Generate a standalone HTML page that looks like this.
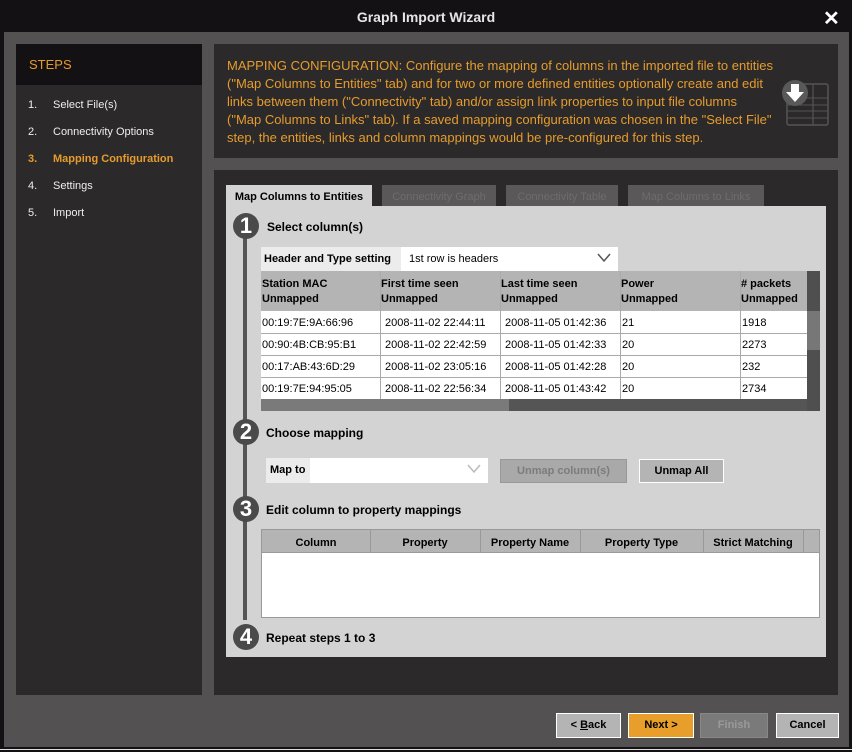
<!DOCTYPE html>
<html><head><meta charset="utf-8"><style>
*{margin:0;padding:0;box-sizing:border-box}
body{width:852px;height:752px;background:#141114;font-family:"Liberation Sans",Arial,sans-serif;position:relative;overflow:hidden}
.a{position:absolute}
.t{font-size:11px;color:#000}
.b{font-weight:bold}
.cell{position:absolute;font-size:11px;line-height:14px;color:#000;white-space:nowrap}
.circ{position:absolute;width:26px;height:26px;border-radius:50%;background:#4a4a4a;color:#fff;font-weight:bold;font-size:22px;line-height:26px;text-align:center;font-family:"Liberation Sans",Arial,sans-serif}
.btn{position:absolute;top:713px;height:25px;font-size:11px;font-weight:bold;text-align:center;line-height:23px;border:1px solid #fff}
</style></head><body>
<div class="a" style="left:0;top:0;width:852px;height:32px;background:#141114;color:#e6e6e6;font-size:14px;font-weight:bold;text-align:center;line-height:34px">Graph Import Wizard</div>
<div class="a" style="left:823px;top:6px;color:#fff;font-size:20px;font-weight:bold">✕</div>
<div class="a" style="left:4px;top:32px;width:845px;height:715px;background:#535152"></div>
<div class="a" style="left:0;top:749px;width:852px;height:1px;background:#ddd"></div>
<!-- sidebar -->
<div class="a" style="left:16px;top:44px;width:186px;height:651px;background:#2c292b"></div>
<div class="a" style="left:16px;top:44px;width:186px;height:41px;background:#141114"></div>
<div class="a" style="left:29px;top:57px;color:#e59c2c;font-size:13px">STEPS</div>
<div class="a" style="left:28px;top:92px;color:#eee;font-size:11px;line-height:27px">
<div><span style="display:inline-block;width:25px">1.</span>Select File(s)</div>
<div><span style="display:inline-block;width:25px">2.</span>Connectivity Options</div>
<div style="color:#e59c2c;font-weight:bold"><span style="display:inline-block;width:25px">3.</span>Mapping Configuration</div>
<div><span style="display:inline-block;width:25px">4.</span>Settings</div>
<div><span style="display:inline-block;width:25px">5.</span>Import</div>
</div>
<!-- info -->
<div class="a" style="left:214px;top:44px;width:624px;height:114px;background:#2c292b"></div>
<div class="a" style="left:227px;top:57px;white-space:nowrap;color:#e59c2c;font-size:13px;line-height:18px">MAPPING CONFIGURATION: Configure the mapping of columns in the imported file to entities<br>("Map Columns to Entities" tab) and for two or more defined entities optionally create and edit<br>links between them ("Connectivity" tab) and/or assign link properties to input file columns<br>("Map Columns to Links" tab). If a saved mapping configuration was chosen in the "Select File"<br>step, the entities, links and column mappings would be pre-configured for this step.</div>
<svg class="a" style="left:780px;top:78px" width="50" height="50">
<rect x="7" y="6" width="41" height="41" rx="2" fill="none" stroke="#555" stroke-width="1.5"/>
<line x1="33" y1="6" x2="33" y2="47" stroke="#555" stroke-width="1.2"/>
<line x1="7" y1="20" x2="48" y2="20" stroke="#555"/><line x1="7" y1="27" x2="48" y2="27" stroke="#555"/><line x1="7" y1="33" x2="48" y2="33" stroke="#555"/><line x1="7" y1="40" x2="48" y2="40" stroke="#555"/>
<circle cx="15" cy="15" r="13" fill="#595959"/>
<path d="M11 6h8v8h5l-9 10-9-10h5z" fill="#fff"/>
</svg>
<!-- main -->
<div class="a" style="left:214px;top:170px;width:624px;height:525px;background:#2c292b"></div>
<div class="a b" style="left:226px;top:185px;width:146px;height:22px;background:#d3d3d3;font-size:11px;line-height:24px;text-align:center">Map Columns to Entities</div>
<div class="a" style="left:382px;top:185px;width:114px;height:21px;background:#5a5859;color:#6e6c6d;font-size:11px;line-height:24px;text-align:center">Connectivity Graph</div>
<div class="a" style="left:506px;top:185px;width:112px;height:21px;background:#5a5859;color:#6e6c6d;font-size:11px;line-height:24px;text-align:center">Connectivity Table</div>
<div class="a" style="left:628px;top:185px;width:136px;height:21px;background:#5a5859;color:#6e6c6d;font-size:11px;line-height:24px;text-align:center">Map Columns to Links</div>
<div class="a" style="left:226px;top:206px;width:600px;height:451px;background:#d3d3d3"></div>
<div class="a" style="left:243px;top:236px;width:4px;height:384px;background:#555"></div>
<div class="circ" style="left:233px;top:213px">1</div>
<div class="circ" style="left:233px;top:419px">2</div>
<div class="circ" style="left:233px;top:496px">3</div>
<div class="circ" style="left:233px;top:624px">4</div>
<div class="a b" style="left:267px;top:220px;font-size:12px">Select column(s)</div>
<div class="a b" style="left:266px;top:426px;font-size:12px">Choose mapping</div>
<div class="a b" style="left:266px;top:503px;font-size:12px">Edit column to property mappings</div>
<div class="a b" style="left:266px;top:631px;font-size:12px">Repeat steps 1 to 3</div>
<!-- header/type -->
<div class="a b" style="left:261px;top:247px;width:140px;height:24px;background:#ececec;font-size:11px;line-height:24px;padding-left:3px">Header and Type setting</div>
<div class="a" style="left:401px;top:247px;width:217px;height:24px;background:#fff;font-size:11px;line-height:24px;padding-left:8px">1st row is headers</div>
<svg class="a" style="left:597px;top:253px" width="14" height="10"><path d="M1 1l6 7 6-7" fill="none" stroke="#555" stroke-width="1.5"/></svg>
<!-- table -->
<div class="a" style="left:261px;top:271px;width:546px;height:40px;background:#b4b4b4"></div>
<div class="a" style="left:261px;top:311px;width:546px;height:88px;background:#fff"></div>
<div class="a" style="left:807px;top:271px;width:13px;height:140px;background:#4f4f4f"></div>
<div class="a" style="left:807px;top:311px;width:13px;height:39px;background:#777"></div>
<div class="a" style="left:261px;top:399px;width:546px;height:12px;background:#555"></div>
<div class="a" style="left:261px;top:399px;width:248px;height:12px;background:#7a7a7a"></div>
<div class="a" style="left:380px;top:271px;width:1px;height:128px;background:#aaa"></div>
<div class="a" style="left:500px;top:271px;width:1px;height:128px;background:#aaa"></div>
<div class="a" style="left:620px;top:271px;width:1px;height:128px;background:#aaa"></div>
<div class="a" style="left:740px;top:271px;width:1px;height:128px;background:#aaa"></div>
<div class="a" style="left:261px;top:333px;width:546px;height:1px;background:#aaa"></div>
<div class="a" style="left:261px;top:355px;width:546px;height:1px;background:#aaa"></div>
<div class="a" style="left:261px;top:377px;width:546px;height:1px;background:#aaa"></div>
<div class="cell b" style="left:262px;top:277px;line-height:15px">Station MAC<br>Unmapped</div>
<div class="cell b" style="left:381px;top:277px;line-height:15px">First time seen<br>Unmapped</div>
<div class="cell b" style="left:501px;top:277px;line-height:15px">Last time seen<br>Unmapped</div>
<div class="cell b" style="left:621px;top:277px;line-height:15px">Power<br>Unmapped</div>
<div class="cell b" style="left:741px;top:277px;line-height:15px"># packets<br>Unmapped</div>
<div class="cell" style="left:262px;top:312px;line-height:22px">00:19:7E:9A:66:96<br>00:90:4B:CB:95:B1<br>00:17:AB:43:6D:29<br>00:19:7E:94:95:05</div>
<div class="cell" style="left:385px;top:312px;line-height:22px">2008-11-02 22:44:11<br>2008-11-02 22:42:59<br>2008-11-02 23:05:16<br>2008-11-02 22:56:34</div>
<div class="cell" style="left:505px;top:312px;line-height:22px">2008-11-05 01:42:36<br>2008-11-05 01:42:33<br>2008-11-05 01:42:28<br>2008-11-05 01:43:42</div>
<div class="cell" style="left:622px;top:312px;line-height:22px">21<br>20<br>20<br>20</div>
<div class="cell" style="left:742px;top:312px;line-height:22px">1918<br>2273<br>232<br>2734</div>
<!-- map to -->
<div class="a b" style="left:266px;top:458px;width:44px;height:25px;background:#ececec;font-size:11px;line-height:25px;padding-left:4px">Map to</div>
<div class="a" style="left:310px;top:458px;width:178px;height:25px;background:#fff"></div>
<svg class="a" style="left:467px;top:464px" width="14" height="10"><path d="M1 1l6 7 6-7" fill="none" stroke="#bbb" stroke-width="1.5"/></svg>
<div class="a b" style="left:500px;top:459px;width:127px;height:24px;background:#a9a9a9;border:1px solid #999;color:#7c7c7c;font-size:11px;line-height:22px;text-align:center">Unmap column(s)</div>
<div class="a b" style="left:639px;top:459px;width:85px;height:24px;background:#b4b4b4;border:1px solid #fff;font-size:11px;line-height:22px;text-align:center">Unmap All</div>
<!-- property table -->
<div class="a" style="left:261px;top:529px;width:559px;height:89px;background:#fff;border:1px solid #999"></div>
<div class="a" style="left:262px;top:530px;width:557px;height:23px;background:#b4b4b4;border-bottom:1px solid #999"></div>
<div class="a" style="left:370px;top:530px;width:1px;height:23px;background:#999"></div>
<div class="a" style="left:480px;top:530px;width:1px;height:23px;background:#999"></div>
<div class="a" style="left:580px;top:530px;width:1px;height:23px;background:#999"></div>
<div class="a" style="left:703px;top:530px;width:1px;height:23px;background:#999"></div>
<div class="a" style="left:803px;top:530px;width:1px;height:23px;background:#999"></div>
<div class="cell b" style="left:262px;top:536px;width:108px;text-align:center">Column</div>
<div class="cell b" style="left:370px;top:536px;width:110px;text-align:center">Property</div>
<div class="cell b" style="left:480px;top:536px;width:100px;text-align:center">Property Name</div>
<div class="cell b" style="left:580px;top:536px;width:123px;text-align:center">Property Type</div>
<div class="cell b" style="left:703px;top:536px;width:100px;text-align:center">Strict Matching</div>
<!-- buttons -->
<div class="btn" style="left:556px;width:65px;background:#b4b4b4">&lt; <u>B</u>ack</div>
<div class="btn" style="left:628px;width:66px;background:#e89e2b">Next &gt;</div>
<div class="btn" style="left:700px;width:68px;background:#7a7a7a;border-color:#888;color:#9a9a9a">Finish</div>
<div class="btn" style="left:776px;width:63px;background:#b4b4b4">Cancel</div>
</body></html>
